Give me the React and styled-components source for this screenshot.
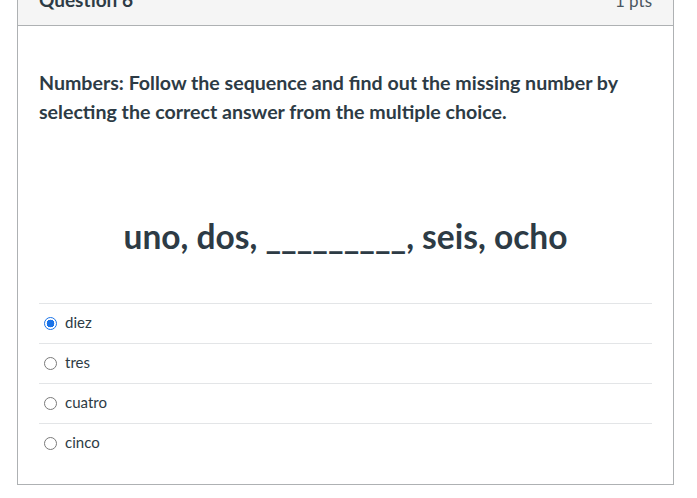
import styled, { createGlobalStyle } from "styled-components"

const GlobalStyle = createGlobalStyle`
  body {
    margin: 0;
    background: #fff;
    font-family: Lato, "Open Sans", sans-serif;
    color: #2d3b45;
  }
`

const Card = styled.section`
  width: 655px;
  margin: -16px 0 0 17px;
  border: 1px solid #aeb1b3;
  background: #fff;
`

const Header = styled.header`
  display: flex;
  justify-content: space-between;
  align-items: baseline;
  height: 41px;
  padding: 0 21px;
  background: #f5f5f5;
  border-bottom: 1px solid #aeb1b3;
  box-sizing: border-box;
`

const Title = styled.h2`
  margin: 0;
  font-size: 19px;
  font-weight: 700;
  line-height: 30px;
`

const Points = styled.span`
  font-size: 17px;
  line-height: 30px;
  color: #4a5660;
`

const Body = styled.div`
  padding: 42px 21px 21px;
`

const Prompt = styled.p`
  margin: 0;
  font-size: 19.6px;
  font-weight: 700;
  line-height: 29px;
`

const Sequence = styled.p`
  margin: 86px 0 43px;
  text-align: center;
  font-size: 33.5px;
  font-weight: 700;
  line-height: 48px;
`

const Answers = styled.ul`
  list-style: none;
  margin: 0;
  padding: 0;
`

const Answer = styled.li`
  display: flex;
  align-items: center;
  gap: 8px;
  height: 40px;
  padding: 0 0 3px 5px;
  border-top: 1px solid #e3e5e7;
  box-sizing: border-box;
  font-size: 15px;
`

const Radio = styled.span`
  width: 13px;
  height: 13px;
  border-radius: 50%;
  box-sizing: border-box;
  border: 1px solid ${(p) => (p.$checked ? "#1a73e8" : "#7a7a7a")};
  background: ${(p) =>
    p.$checked ? "radial-gradient(circle, #1a73e8 0 3.6px, #fff 4.1px)" : "#fff"};
  margin-top: 2px;
`

const options = ["diez", "tres", "cuatro", "cinco"]

export default function App() {
  return (
    <>
      <GlobalStyle />
      <Card>
        <Header>
          <Title>Question 6</Title>
          <Points>1 pts</Points>
        </Header>
        <Body>
          <Prompt>
            Numbers: Follow the sequence and find out the missing number by
            selecting the correct answer from the multiple choice.
          </Prompt>
          <Sequence>uno, dos, _________, seis, ocho</Sequence>
          <Answers>
            {options.map((o, i) => (
              <Answer key={o}>
                <Radio $checked={i === 0} />
                {o}
              </Answer>
            ))}
          </Answers>
        </Body>
      </Card>
    </>
  )
}
